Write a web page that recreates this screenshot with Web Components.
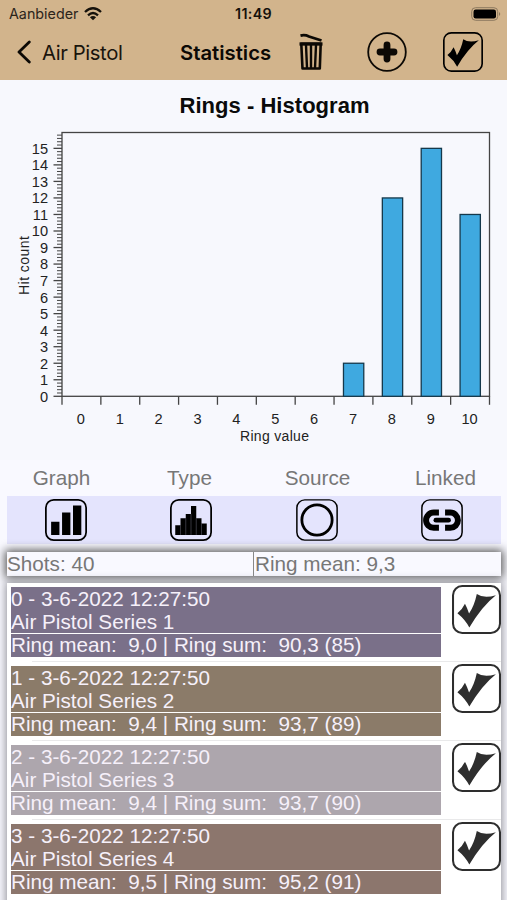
<!DOCTYPE html>
<html lang="en">
<head>
<meta charset="utf-8">
<title>Statistics</title>
<style>
  html, body {
    margin: 0;
    height: 900px;
    overflow: hidden;
  }
  body {
    width: 507px;
    background: #f9f9ff;
    font-family: "Liberation Sans", Arial, sans-serif;
    font-size: 20.7px;
    color: #777;
  }
</style>
</head>
<body>
<statistics-page></statistics-page>

<script>
// Icon bodies, all drawn on a 48x48 grid
const ICONS = {
  check: `<path d="M5.3 27.7Q10 24 12.7 18.3Q15 22.5 16.7 28Q22 20 24.3 8.8Q31 13.5 43 10Q29 21 17 41.7Q13 34 5.3 27.7Z"/>`,
  bars: `<path d="M7 26h9.5v15H7zM19.5 15.5H29v25.5h-9.5zM32 7.5h9.5V41H32z"/>`,
  histogram: `<path d="M6 30h6v-8h6v-5h6V8h6v14h6v6h6v13H6z"/><path d="M12 30v11M18 22v19M24 17v24M30 22v19M36 28v13" stroke="#77778a" stroke-width=".5"/>`,
  ring: `<circle cx="24" cy="24" r="17.3" fill="none" stroke="#000" stroke-width="3.2"/>`,
  link: `<path d="M20.5 15.5h-6a8.7 8.7 0 0 0 0 17.4h6M27.5 15.5h6a8.7 8.7 0 0 1 0 17.4h-6" fill="none" stroke="#000" stroke-width="6.8"/><path d="M17 24.2h14.500" stroke="#000" stroke-width="5.4" stroke-linecap="round"/>`,
};

class BoxIcon extends HTMLElement {
  constructor() {
    super();
    this.attachShadow({ mode: 'open' });
  }

  connectedCallback() {
    const stroke = this.getAttribute('stroke') || 2;
    this.shadowRoot.innerHTML = `
      <style>
        :host { display: block; flex: none; width: 42px; height: 42px; color: #000; }
        svg { display: block; width: 100%; height: 100%; }
      </style>
      <svg viewBox="0 0 48 48" fill="currentColor">
        <rect x="1" y="1" width="46" height="46" rx="9" fill="var(--icon-fill, none)" stroke="currentColor" stroke-width="${stroke}"/>
        ${ICONS[this.getAttribute('name')]}
      </svg>
    `;
  }
}

class StatusBar extends HTMLElement {
  constructor() {
    super();
    this.attachShadow({ mode: 'open' });
    this.shadowRoot.innerHTML = `
      <style>
        :host {
          display: grid;
          grid-template-columns: 1fr auto 1fr;
          align-items: center;
          height: 27px;
          padding: 0 6px 0 9px;
          font: 14.3px Inter, sans-serif;
          color: #2c251b;
        }
        .carrier { display: flex; align-items: center; gap: 6px; }
        .time { font-weight: 600; color: #15110b; letter-spacing: .3px; margin-right: 3px; }
        .battery { justify-self: end; }
        svg { display: block; }
      </style>
      <div class="carrier">
        <span>Aanbieder</span>
        <svg width="18" height="14" viewBox="0 0 18 14" fill="none" stroke="#15110b" stroke-width="2.3">
          <path d="M1 5Q9 -2.5 17 5M4 8.3Q9 3.8 14 8.3"/>
          <path d="M9 13.2L5.9 10.3Q9 7.8 12.1 10.3Z" fill="#15110b" stroke="none"/>
        </svg>
      </div>
      <span class="time">11:49</span>
      <svg class="battery" width="30" height="14" viewBox="0 0 30 14">
        <rect x=".7" y=".7" width="26" height="12.6" rx="3.8" fill="none" stroke="#8c795f"/>
        <rect x="2.5" y="2.5" width="22.5" height="9" rx="2.2"/>
        <path d="M28 5q2.5 2 0 4z" fill="#8c795f"/>
      </svg>
    `;
  }
}

class NavBar extends HTMLElement {
  constructor() {
    super();
    this.attachShadow({ mode: 'open' });
    this.shadowRoot.innerHTML = `
      <style>
        :host {
          display: flex;
          align-items: center;
          height: 50px;
          padding: 0 24px 0 17px;
          box-sizing: border-box;
          font: 20.3px Inter, sans-serif;
          color: #1a140c;
        }
        .back { display: flex; align-items: center; gap: 11px; width: 163px; letter-spacing: -.4px; }
        .title { font-weight: 600; width: 118px; color: #0c0905; }
        .actions { display: flex; align-items: center; gap: 43px; }
        svg { display: block; }
        .add { margin-right: -7px; }
        box-icon { width: 40px; height: 40px; }
      </style>
      <div class="back">
        <svg width="14" height="24" viewBox="0 0 14 24" fill="none" stroke="#0c0905" stroke-width="2.8" stroke-linecap="round" stroke-linejoin="round">
          <path d="M12.3 2L2 12l10.3 10"/>
        </svg>
        <span>Air Pistol</span>
      </div>
      <span class="title">Statistics</span>
      <div class="actions">
        <svg width="26" height="38" viewBox="0 0 26 38" fill="none" stroke="#0c0905">
          <path d="M2.5 2.6Q7 1.5 11 3.5L23.5 7.5" stroke-width="2.8"/>
          <path d="M3.300 10.8h19.400L21.800 35.5H4.500z" stroke-width="2.6" stroke-linejoin="round"/>
          <path d="M1.5 11h23" stroke-width="3.3"/>
          <path d="M8 12l1 23M13 12v23M18 12l-1 23" stroke-width="2.4"/>
        </svg>
        <svg class="add" width="40" height="40" viewBox="0 0 40 40">
          <circle cx="20" cy="20" r="18.8" fill="none" stroke="#0c0905" stroke-width="1.8"/>
          <path d="M20 13v14M13 20h14" stroke="#0c0905" stroke-width="6.8" stroke-linecap="round"/>
        </svg>
        <box-icon name="check"></box-icon>
      </div>
    `;
  }
}

class RingHistogram extends HTMLElement {
  constructor() {
    super();
    this.attachShadow({ mode: 'open' });
  }

  connectedCallback() {
    this.render(this.getAttribute('values').split(',').map(Number));
  }

  render(values) {
    // Plot area, in svg units
    const left = 62;
    const right = 489.5;
    const top = 52.5;
    const bottom = 316.3;
    const unit = 16.53;
    const step = (right - left) / values.length;

    let ticks = '';
    let labels = '';
    let bars = '';

    for (let i = 0; i < 80; i++) {
      const y = bottom - i * unit / 5;
      const major = i % 5 === 0;
      ticks += `<path d="M${major ? 53.5 : 57} ${y}H${left}" stroke-width="${major ? 1.3 : 1}"/>`;
      if (major) {
        labels += `<text x="48" y="${y + 5.4}" text-anchor="end">${i / 5}</text>`;
      }
    }

    values.forEach((value, i) => {
      const x = left + i * step;
      const center = x + step / 2;
      ticks += `<path d="M${x} ${bottom}v8.5"/>`;
      labels += `<text x="${center - 0.5}" y="344" text-anchor="middle">${i}</text>`;
      if (value) {
        bars += `<rect x="${center - 10}" y="${bottom - value * unit}" width="20.3" height="${value * unit}"/>`;
      }
    });
    ticks += `<path d="M${right} ${bottom}v8.5"/>`;

    this.shadowRoot.innerHTML = `
      <style>
        :host { display: block; background: #f7f8fd; height: 380px; }
        svg { display: block; font: 14.6px "Liberation Sans", Arial, sans-serif; fill: #222; }
        .title { font-weight: bold; font-size: 22px; fill: #0a0a0a; }
        .axis { font-size: 14px; }
      </style>
      <svg width="507" height="380" viewBox="0 0 507 380">
        <text class="title" x="179.5" y="33" textLength="190">Rings - Histogram</text>
        <g fill="none" stroke="#444" stroke-width="1.3">
          <rect x="${left}" y="${top}" width="${right - left}" height="${bottom - top}"/>
          ${ticks}
        </g>
        <g fill="#3fa9e0" stroke="#15384b" stroke-width="1.3">${bars}</g>
        ${labels}
        <text class="axis" x="240" y="361" textLength="69">Ring value</text>
        <text class="axis" transform="translate(29 215) rotate(-90)" textLength="59">Hit count</text>
      </svg>
    `;
  }
}

class FilterPanel extends HTMLElement {
  constructor() {
    super();
    this.attachShadow({ mode: 'open' });
    this.shadowRoot.innerHTML = `
      <style>
        :host { display: block; }
        .labels {
          display: grid;
          grid-template-columns: repeat(4, 128px);
          height: 36px;
          margin-left: -2.5px;
          align-items: center;
          justify-items: center;
        }
        .buttons {
          display: grid;
          grid-template-columns: repeat(4, 125.3px);
          justify-content: center;
          justify-items: center;
          align-items: center;
          height: 48px;
          margin: 0 6px 0 7px;
          background: #e4e4fd;
        }
      </style>
      <div class="labels">
        <span>Graph</span><span>Type</span><span>Source</span><span>Linked</span>
      </div>
      <div class="buttons">
        <box-icon name="bars"></box-icon>
        <box-icon name="histogram"></box-icon>
        <box-icon name="ring" stroke="1.7"></box-icon>
        <box-icon name="link" stroke="1.7"></box-icon>
      </div>
    `;
  }
}

class SummaryBar extends HTMLElement {
  constructor() {
    super();
    this.attachShadow({ mode: 'open' });
    this.shadowRoot.innerHTML = `
      <style>
        :host {
          display: grid;
          grid-template-columns: 246px 1fr;
          margin: 8px 6px 7px 7px;
          height: 24px;
          line-height: 24px;
          background: #f9f9ff;
          box-shadow: 0 0 10px 2px #555;
        }
        ::slotted(:last-child) { border-left: 1px solid #888; padding-left: 1px; }
      </style>
      <slot></slot>
    `;
  }
}

class SeriesItem extends HTMLElement {
  constructor() {
    super();
    this.attachShadow({ mode: 'open' });
  }

  connectedCallback() {
    const color = this.getAttribute('color');
    this.shadowRoot.innerHTML = `
      <style>
        :host {
          display: flex;
          justify-content: space-between;
          box-sizing: border-box;
          height: 79px;
          padding-left: 4px;
          color: #f6f0fa;
          --icon-fill: #fff;
        }
        .body { display: grid; grid-template-rows: 46px 23px; gap: 1px; width: 430px; padding-top: 4px; line-height: 23px; }
        .body div { background: ${color}; white-space: pre; }
        .body div + div { line-height: 22px; }
        box-icon { width: 49px; height: 49px; color: #2e2e2e; margin-top: 1.5px; }
        /* hairline starts past the left inset */
        :host(:not(:last-child)) {
          background: linear-gradient(#e9e9ea, #e9e9ea) 25px 78px / 470px 1px no-repeat;
        }
      </style>
      <div class="body">
        <div><slot></slot></div>
        <div><slot name="score"></slot></div>
      </div>
      <box-icon name="check"></box-icon>
    `;
  }
}

class SeriesList extends HTMLElement {
  constructor() {
    super();
    this.attachShadow({ mode: 'open' });
    this.shadowRoot.innerHTML = `
      <style>
        :host {
          display: block;
          height: 340px;
          margin: 0 6px 0 7px;
          background: #fff;
          box-shadow: 0 0 9px 1px #8b8b93;
        }
      </style>
      <slot></slot>
    `;
  }
}

class StatisticsPage extends HTMLElement {
  constructor() {
    super();
    this.attachShadow({ mode: 'open' });
  }

  connectedCallback() {
    const series = [
      ['Air Pistol Series 1', '9,0', '90,3 (85)', '#7a7089'],
      ['Air Pistol Series 2', '9,4', '93,7 (89)', '#8b7b69'],
      ['Air Pistol Series 3', '9,4', '93,7 (90)', '#ada6ad'],
      ['Air Pistol Series 4', '9,5', '95,2 (91)', '#8c766d'],
    ];

    this.shadowRoot.innerHTML = `
      <style>
        :host { display: flex; flex-direction: column; height: 900px; overflow: hidden; }
        header { background: #d2b48c; height: 80px; flex: none; }
        series-list { flex: none; }
      </style>
      <header>
        <status-bar></status-bar>
        <nav-bar></nav-bar>
      </header>
      <ring-histogram values="0,0,0,0,0,0,0,2,12,15,11"></ring-histogram>
      <filter-panel></filter-panel>
      <summary-bar><span>Shots: 40</span><span>Ring mean: 9,3</span></summary-bar>
      <series-list>
        ${series.map(([name, mean, sum, color], i) => `<series-item color="${color}">${i} - 3-6-2022 12:27:50<br>${name}<span slot="score">Ring mean:  ${mean} | Ring sum:  ${sum}</span></series-item>`).join('')}
      </series-list>
    `;
  }
}

customElements.define('box-icon', BoxIcon);
customElements.define('status-bar', StatusBar);
customElements.define('nav-bar', NavBar);
customElements.define('ring-histogram', RingHistogram);
customElements.define('filter-panel', FilterPanel);
customElements.define('summary-bar', SummaryBar);
customElements.define('series-item', SeriesItem);
customElements.define('series-list', SeriesList);
customElements.define('statistics-page', StatisticsPage);
</script>
</body>
</html>
